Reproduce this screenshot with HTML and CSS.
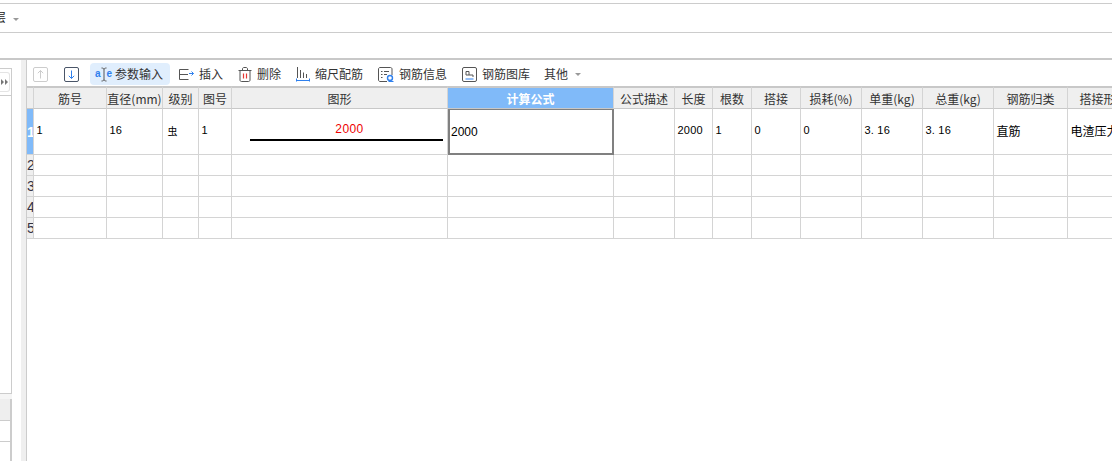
FILE: index.html
```html
<!DOCTYPE html>
<html lang="zh">
<head>
<meta charset="utf-8">
<title>钢筋编辑</title>
<link rel="stylesheet" href="styles.css">
</head>
<body>
<header class="topbar"><span class="floor">层</span><span class="caret"></span></header>
<div class="subbar"></div>
<main class="main">
  <aside class="side">
    <div class="side-box">
      <div class="side-head"><span class="side-btn"><svg width="7" height="6" viewBox="0 0 7 6"><path d="M0 0l3 3-3 3zM4 0l3 3-3 3z" fill="#777"/></svg></span></div>
      <div class="side-body"></div>
    </div>
    <div class="side-gap"></div>
    <div class="side-th"></div>
    <div class="side-row"></div>
    <div class="side-row last"></div>
  </aside>
  <div class="strip"></div>
  <section class="content">
    <div class="toolbar">
      <span class="tool up"><svg width="15" height="15" viewBox="0 0 15 15" fill="none"><rect x=".5" y=".5" width="14" height="14" rx="1.5" stroke="#ccc"/><path d="M7.5 11.5V3.5M4.8 6.2l2.7-2.7 2.7 2.7" stroke="#ccc"/></svg></span>
      <span class="tool down"><svg width="15" height="15" viewBox="0 0 15 15" fill="none"><rect x=".5" y=".5" width="14" height="14" rx="1.5" stroke="#4a5568"/><path d="M7.5 3.5v8M4.8 8.8l2.7 2.7 2.7-2.7" stroke="#2f80ed"/></svg></span>
      <span class="tool active"><span class="ae"><b>a</b><svg width="6" height="15" viewBox="0 0 6 15" fill="none"><path d="M.5 1c1.500 0 2.500.5 2.500 1.500v10c0 1-1 1.500-2.500 1.500M5.500 1C4 1 3 1.500 3 2.500M5.500 14C4 14 3 13.500 3 12.500" stroke="#555"/></svg><b>e</b></span><span>参数输入</span></span>
      <span class="tool"><svg width="15" height="15" viewBox="0 0 15 15" fill="none"><path d="M9.500 2.500H.5v10h9M.5 7.500h8.500" stroke="#555"/><path d="M10 6.500h4.500M12.500 4.500l2 2-2 2" stroke="#2f80ed"/></svg><span>插入</span></span>
      <span class="tool"><svg width="14" height="15" viewBox="0 0 14 15" fill="none"><path d="M.5 3.500h13M2 3.500v9.500c0 .8.500 1.500 1.300 1.500h7.400c.8 0 1.300-.7 1.300-1.500V3.500M4.500 3.500V2c0-.8.500-1.500 1.300-1.500h2.400c.8 0 1.300.7 1.300 1.500v1.500" stroke="#555"/><path d="M5.500 6.500v5M8.500 6.500v5" stroke="#e53935" stroke-width="1.200"/></svg><span>删除</span></span>
      <span class="tool"><svg width="14" height="15" viewBox="0 0 14 15" fill="none"><path d="M1.500 0v11M4.500 3V11M7.500 5.500V11M10.500 7V11" stroke="#555"/><path d="M0 13.500h14M.5 11.500v3M13.500 11.500v3" stroke="#2f80ed"/></svg><span>缩尺配筋</span></span>
      <span class="tool"><svg width="16" height="15" viewBox="0 0 16 15" fill="none"><path d="M9 14.500H2c-.8 0-1.500-.7-1.500-1.500V2C.5 1.200 1.200.5 2 .5h10.500c.8 0 1.500.7 1.500 1.500v6" stroke="#555"/><path d="M3 4.500h1.500M6 4.500h5M3 7.500h1.500M6 7.500h3M3 10.500h1.500" stroke="#555"/><circle cx="12" cy="11" r="2.500" stroke="#2f80ed" stroke-width="1.400"/><path d="M10.500 14.500h5" stroke="#2f80ed"/></svg><span>钢筋信息</span></span>
      <span class="tool"><svg width="15" height="15" viewBox="0 0 15 15" fill="none"><rect x=".5" y=".5" width="14" height="14" rx="1.500" stroke="#555"/><path d="M4 8V4.500h3V8M4 8h7v2" stroke="#555"/><path d="M3.500 12h8" stroke="#2f80ed"/></svg><span>钢筋图库</span></span>
      <span class="tool other"><span>其他</span><span class="caret"></span></span>
    </div>
    <div class="grid-wrap">
      <table class="grid">
        <colgroup>
          <col class="c7"><col class="c73"><col class="c56"><col class="c36"><col class="c33"><col class="c216"><col class="c166"><col class="c61"><col class="c38"><col class="c39"><col class="c49"><col class="c61"><col class="c61"><col class="c71"><col class="c74"><col class="c72">
        </colgroup>
        <thead>
          <tr>
            <th></th><th>筋号</th><th>直径(mm)</th><th>级别</th><th>图号</th><th>图形</th><th class="sel-head">计算公式</th><th>公式描述</th><th>长度</th><th>根数</th><th>搭接</th><th>损耗(%)</th><th>单重(kg)</th><th>总重(kg)</th><th>钢筋归类</th><th>搭接形式</th>
          </tr>
        </thead>
        <tbody>
          <tr class="tall">
            <td class="rh sel-rh">1</td><td class="num">1</td><td class="num">16</td><td class="num"><span class="grade">虫</span></td><td class="num">1</td>
            <td class="shape"><div class="shape-label">2000</div><div class="shape-line"></div></td>
            <td class="formula">2000</td><td></td><td class="num">2000</td><td class="num">1</td><td class="num">0</td><td class="num">0</td><td class="num">3. 16</td><td class="num">3. 16</td><td class="cn">直筋</td><td class="cn">电渣压力焊</td>
          </tr>
          <tr><td class="rh">2</td><td></td><td></td><td></td><td></td><td></td><td></td><td></td><td></td><td></td><td></td><td></td><td></td><td></td><td></td><td></td></tr>
          <tr><td class="rh">3</td><td></td><td></td><td></td><td></td><td></td><td></td><td></td><td></td><td></td><td></td><td></td><td></td><td></td><td></td><td></td></tr>
          <tr><td class="rh">4</td><td></td><td></td><td></td><td></td><td></td><td></td><td></td><td></td><td></td><td></td><td></td><td></td><td></td><td></td><td></td></tr>
          <tr><td class="rh">5</td><td></td><td></td><td></td><td></td><td></td><td></td><td></td><td></td><td></td><td></td><td></td><td></td><td></td><td></td><td></td></tr>
        </tbody>
      </table>
    </div>
  </section>
</main>
</body>
</html>
```
FILE: styles.css
```css
* { box-sizing: border-box; }
html, body { margin: 0; height: 100%; overflow: hidden; background: #fff; }
body {
  display: flex;
  flex-direction: column;
  padding-top: 3px;
  font: 12px/1 "Noto Sans CJK SC", "Noto Sans", sans-serif;
  color: #222;
}
.topbar {
  flex: none;
  height: 30px;
  border-top: 1px solid #ccc;
  border-bottom: 1px solid #ccc;
  display: flex;
  align-items: center;
  overflow: hidden;
}
.floor { margin-left: -6px; width: 12px; padding-bottom: 2px; }
.caret {
  width: 0;
  height: 0;
  border: 3px solid transparent;
  border-top: 3px solid #999;
  border-bottom: 0;
}
.topbar .caret { margin: 3px 0 0 7px; }
.subbar { flex: none; height: 25px; }
.main {
  flex: 1;
  min-height: 0;
  display: flex;
  border-top: 2px solid #c8c8c8;
}
.side { flex: none; width: 21px; display: flex; flex-direction: column; }
.side-box {
  width: 12px;
  height: 326px;
  margin-top: 8px;
  border: solid #ccc;
  border-width: 1px 1px 1px 0;
  flex: none;
}
.side-head { height: 27px; border-bottom: 1px solid #ccc; padding-top: 3px; }
.side-btn {
  display: flex;
  align-items: center;
  justify-content: center;
  width: 10px;
  height: 20px;
  background: #fff;
  border: solid #e4e4e4;
  border-width: 1px 1px 1px 0;
  border-radius: 0 3px 3px 0;
}
.side-gap { flex: none; width: 12px; height: 5px; background: #f5f5f5; }
.side-th { flex: none; width: 12px; height: 22px; background: #eee; border-right: 2px solid #ccc; border-bottom: 1px solid #ccc; }
.side-row { flex: none; width: 12px; height: 21px; border-right: 2px solid #ccc; border-bottom: 1px solid #ccc; }
.side-row.last { flex: 1; border-bottom: 0; }
.strip { flex: none; width: 5px; background: #efefef; }
.content { flex: 1; min-width: 0; border-left: 1px solid #ccc; display: flex; flex-direction: column; }
.toolbar {
  flex: none;
  height: 26px;
  padding: 2px 0 0 6px;
  display: flex;
  align-items: center;
  gap: 15px;
  color: #333;
}
.tool { display: flex; align-items: center; gap: 5px; white-space: nowrap; flex: none; }
.tool svg { display: block; flex: none; }
.tool.down { margin-left: 1px; }
.tool.active {
  margin: 0 -6px 0 -4px;
  height: 22px;
  padding: 0 7px 0 5px;
  gap: 4px;
  background: #e0eefd;
  border-radius: 4px;
}
.ae {
  display: flex;
  align-items: center;
  gap: 0;
  width: 16px;
  font: 700 10px/1 "Liberation Sans", sans-serif;
  color: #2f80ed;
}
.tool.other { margin-left: -1px; gap: 7px; }
.grid-wrap { flex: none; overflow: hidden; }
.grid {
  width: 1113px;
  table-layout: fixed;
  border-collapse: separate;
  border-spacing: 0;
}
.c7 { width: 7px; } .c73 { width: 73px; } .c56 { width: 56px; } .c36 { width: 36px; }
.c33 { width: 33px; } .c216 { width: 216px; } .c166 { width: 166px; } .c61 { width: 61px; }
.c38 { width: 38px; } .c39 { width: 39px; } .c49 { width: 49px; } .c71 { width: 71px; }
.c74 { width: 74px; } .c72 { width: 72px; }
th, td {
  padding: 0;
  border-right: 1px solid #d4d4d4;
  border-bottom: 1px solid #d4d4d4;
  overflow: hidden;
  white-space: nowrap;
}
th {
  height: 23px;
  background: #efefef;
  font-weight: 400;
  color: #333;
  text-align: center;
  border-top: 2px solid #c8c8c8;
  padding-top: 1px;
  border-bottom-color: #c8c8c8;
}
td { height: 21px; }
tr.tall td { height: 46px; }
th.sel-head { background: #80baf9; color: #fff; font-weight: 700; }
.rh {
  background: #efefef;
  font: 14px/1 "Liberation Sans", sans-serif;
  color: #334;
  text-align: left;
}
.sel-rh { background: #80baf9; color: #fff; font-weight: 700; }
.num {
  font: 11px/1 "Liberation Sans", sans-serif;
  color: #000;
  padding: 0 0 2px 2.500px;
  letter-spacing: .2px;
}
.grade { display: block; padding-left: 2px; font: 10px/1 "Noto Sans CJK SC", sans-serif; color: #000; }
.shape { padding: 0 4px 0 18px; vertical-align: top; }
.shape-label {
  margin-top: 14px;
  padding-left: 6px;
  text-align: center;
  font: 12px/1 "Liberation Sans", sans-serif;
  color: #e00;
  letter-spacing: .4px;
}
.shape-line { height: 2px; margin-top: 4px; background: #000; }
tr.tall td.formula {
  border: 2px solid #808080;
  border-top-width: 1px;
  padding: 0 0 0 1px;
  font: 12px/1 "Liberation Sans", sans-serif;
  color: #000;
}
.cn { padding: 0 0 2px 2.500px; font-size: 12px; color: #000; }
```
